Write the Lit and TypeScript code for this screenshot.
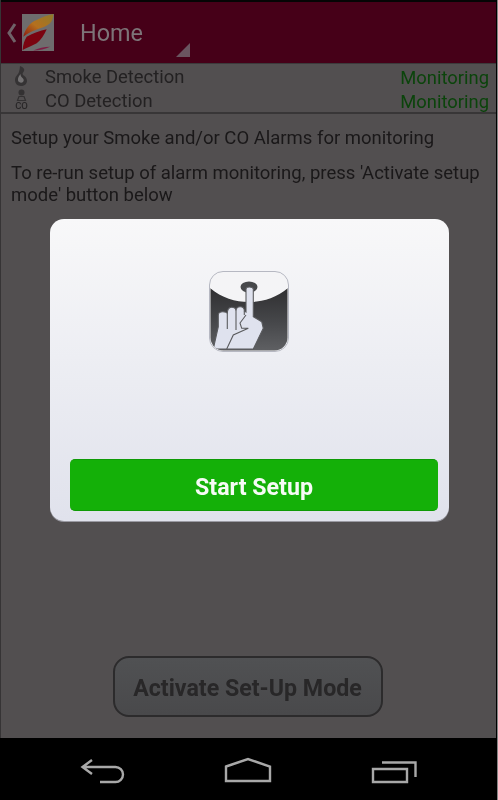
import { LitElement, html, css } from "lit";
import { customElement } from "lit/decorators.js";

@customElement("app-root")
export class AppRoot extends LitElement {
  static styles = css`
    :host { display: block; width: 498px; height: 800px; overflow: hidden; font-family: Roboto, "Liberation Sans", sans-serif; }
    .screen { position: relative; width: 498px; height: 800px; background: #524f50; display: flex; flex-direction: column; filter: blur(0.4px); }
    .edge-left { position: absolute; left: 0; top: 0; width: 1px; height: 738px; background: #363435; }
    .edge-right { position: absolute; right: 0; top: 0; width: 1px; height: 800px; background: #858585; border-left: 1px solid #000; }
    .status { height: 2px; background: #050505; flex: none; }
    .header { height: 62px; flex: none; background: #460018; border-bottom: 1px solid #3c3a3b; display: flex; align-items: center; padding-left: 7px; position: relative; box-sizing: border-box; }
    .chev { width: 10px; height: 24px; margin-right: 5px; margin-top: 1px; display: block; }
    .logo { width: 32px; height: 37px; display: block; }
    .title { font-size: 23.4px; color: #7d7478; margin-left: 26px; line-height: 28px; }
    .corner { position: absolute; left: 175px; top: 40px; width: 16px; height: 16px; display: block; }
    .rows { height: 47px; flex: none; border-bottom: 2px solid #383637; display: flex; flex-direction: column; padding-top: 1px; }
    .row { height: 24px; display: flex; align-items: center; padding: 0 9px 0 14px; font-size: 18.4px; color: #232122; }
    .row svg { width: 14px; height: 20px; flex: none; display: block; margin-top: -2px; }
    .row .name { margin-left: 17px; flex: 1; }
    .row .state { color: #0b440b; margin-top: 2px; }
    .copy { padding: 13px 11px 0; font-size: 18.5px; line-height: 22px; color: #1a1819; }
    .copy p { margin: 0 0 13px; }
    .spacer { flex: 1; }
    .activate-wrap { display: flex; justify-content: center; padding: 0 3px 21px 0; }
    .activate { width: 270px; height: 61px; box-sizing: border-box; border: 2px solid #2c2b2c; border-radius: 16px; background: linear-gradient(#505153, #49494b); display: flex; align-items: center; justify-content: center; padding-top: 2px; font-size: 23.2px; font-weight: 700; color: #282728; }
    .nav { height: 62px; flex: none; background: #000; display: flex; align-items: flex-start; gap: 99px; padding: 16px 0 0 79px; box-sizing: border-box; }
    .nav svg { display: block; }
    .dialog { position: absolute; left: 50px; top: 219px; width: 399px; height: 302px; box-sizing: border-box; border-radius: 14px; background: linear-gradient(#f8f8f9, #e0e2ec); box-shadow: 0 1px 0 #9a9aa2; display: flex; flex-direction: column; align-items: center; padding: 52px 0 10px; }
    .app-icon { width: 80px; height: 81px; display: block; flex: none; margin-left: -2px; }
    .start { margin: auto 0 0 9px; width: 368px; height: 52px; box-sizing: border-box; flex: none; border-radius: 5px; background: #14b008; border-top: 1px solid #0f9a06; border-bottom: 1px solid #0f9a06; display: flex; align-items: center; justify-content: center; padding-top: 3px; font-size: 23.2px; font-weight: 700; color: #f6fbf5; }
  `;

  private flame() {
    return html`<svg viewBox="0 0 14 20">
      <path d="M6 0C9 1 11 3 10 5 9 7 8 7 9 9c2 1 4 3 4 6 0 3-3 5-6 5-4 0-6-3-6-6 0-4 3-5 4-8 .5-2 1-4 1-6z" fill="#353334"/>
      <path d="M6.500 8C5 10 3.500 12 4 14.500c.5 2 3.500 3 5 1.500 1.500-1.500.5-3.500-1-4.500C7 10.500 6.500 9.500 6.500 8z" fill="#737172"/>
    </svg>`;
  }

  private co() {
    return html`<svg viewBox="0 0 14 20">
      <circle cx="7.500" cy="3.500" r="3" fill="#333132"/>
      <path d="M5 7.500h5l1.500 4h-8z" fill="none" stroke="#333132" stroke-width="1.200"/>
      <text x="7.500" y="19.500" font-size="9.500" font-family="Roboto" font-weight="500" text-anchor="middle" fill="#282627">CO</text>
    </svg>`;
  }

  render() {
    return html`
      <div class="screen">
        <div class="status"></div>
        <div class="header">
          <svg class="chev" viewBox="0 0 10 24"><path d="M8 3 2 12l6 9" fill="none" stroke="#6f6268" stroke-width="3"/></svg>
          <svg class="logo" viewBox="0 0 32 37">
            <defs>
              <linearGradient id="fe" x1="0" y1="1" x2="1" y2="0">
                <stop offset="0" stop-color="#8c1a10"/><stop offset=".45" stop-color="#b5701e"/><stop offset="1" stop-color="#8f7a2c"/>
              </linearGradient>
            </defs>
            <rect width="32" height="37" fill="#6e6c6d"/>
            <path d="M1.300 22.700C3 15 8 8.500 14.700 6 20 3 26 1 31.300 0c0 4-1.300 7-3.300 9.300-3 2.700-7 4-10 5-6 2-12 4.700-16.700 8.400z" fill="url(#fe)"/>
            <path d="M.7 36C1 30 2.500 26 4.700 22.700 11 19 18 17 24.700 15.300 22 21 19 26 14.700 29.300 10 32 5 33.500.7 36z" fill="#7a0410"/>
            <path d="M11.300 36.500c5-2.500 11-3.500 17-3.800-5 2.500-11 3.500-17 3.800z" fill="#7e1c44"/>
          </svg>
          <div class="title">Home</div>
          <svg class="corner" viewBox="0 0 16 16"><path d="M15 1v14H1z" fill="#6a5560"/></svg>
        </div>
        <div class="rows">
          <div class="row">${this.flame()}<span class="name">Smoke Detection</span><span class="state">Monitoring</span></div>
          <div class="row">${this.co()}<span class="name">CO Detection</span><span class="state">Monitoring</span></div>
        </div>
        <div class="copy">
          <p>Setup your Smoke and/or CO Alarms for monitoring</p>
          <p>To re-run setup of alarm monitoring, press 'Activate setup mode' button below</p>
        </div>
        <div class="spacer"></div>
        <div class="activate-wrap"><div class="activate">Activate Set-Up Mode</div></div>
        <div class="nav">
          <svg width="46" height="30" viewBox="0 0 46 30" fill="none" stroke="#a8a8a8" stroke-width="2.4">
            <path d="M13 6 3.500 13l9.500 7M3.500 13H36.500a7.500 7.500 0 0 1 0 15H21"/>
          </svg>
          <svg width="48" height="30" viewBox="0 0 48 30" fill="none" stroke="#a8a8a8" stroke-width="2.4">
            <path d="M2 12.500 24 5l22 7.500V27H2z"/>
          </svg>
          <svg width="46" height="30" viewBox="0 0 46 30" fill="none" stroke="#a8a8a8" stroke-width="2.400">
            <path d="M2 15h34v13H2z"/><path d="M11 8.500h33.500V23"/>
          </svg>
        </div>
        <div class="dialog">
          <svg class="app-icon" viewBox="0 0 80 81">
            <defs>
              <clipPath id="ic"><rect x="1.500" y="1.500" width="77" height="78" rx="13"/></clipPath>
              <linearGradient id="dk" x1="0" y1="0" x2="0" y2="1"><stop offset="0" stop-color="#2f2f31"/><stop offset=".55" stop-color="#47484b"/><stop offset="1" stop-color="#606164"/></linearGradient>
            </defs>
            <rect x="0.500" y="0.500" width="79" height="80" rx="13.500" fill="#f4f4f6" stroke="#b6b8c2"/>
            <g clip-path="url(#ic)">
              <path d="M1 17C13 27 26 31 40 31s27-4 39-14v64H1z" fill="url(#dk)"/>
            </g>
            <ellipse cx="40" cy="16" rx="8.500" ry="5.500" fill="#47484b"/>
            <g clip-path="url(#ic)">
              <path d="M37 18q0-2 3.500-2t3.800 2V45.700L52.700 50.700 54.300 57.300 44.300 78H4.300L9.300 55.700V44q0-3.300 4.500-3.300T18.300 43q0-6.700 4.300-6.700T27 40q0-4.300 4.200-4.300T35.300 40L37 41z" fill="#dfe2ee" stroke="#5a5b5e" stroke-width="1.100"/>
              <path d="M18.300 43V58M27 40V59M35.300 40V44M37 44 31 52 32.700 57.300H39.300L24.300 64 17.700 78" fill="none" stroke="#5a5b5e" stroke-width="1.100"/>
            </g>
          </svg>
          <div class="start">Start Setup</div>
        </div>
        <div class="edge-left"></div>
        <div class="edge-right"></div>
      </div>
    `;
  }
}
